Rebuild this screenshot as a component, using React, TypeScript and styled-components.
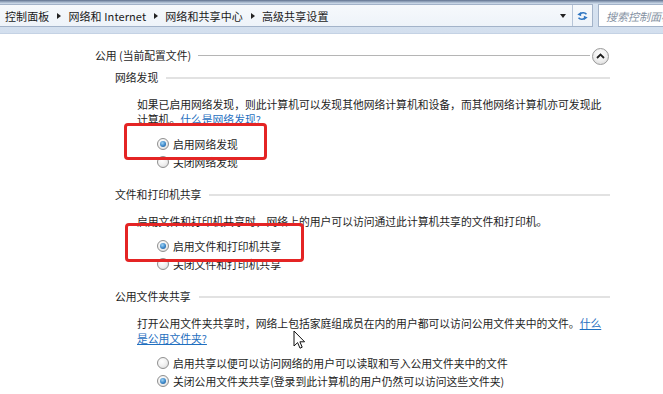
import React from "react";
import styled, { createGlobalStyle } from "styled-components";

const Global = createGlobalStyle`
  html, body { margin: 0; padding: 0; background: #fff; overflow: hidden; }
  body { font-family: "Noto Sans CJK SC", "Noto Sans", sans-serif; color: #222; }
  * { box-sizing: border-box; }
`;

const Page = styled.div`
  position: relative;
  width: 663px;
  height: 394px;
  overflow: hidden;
  background: #fff;
  font-size: 11px;
  letter-spacing: 0;
`;

const Toolbar = styled.div`
  height: 34px;
  display: flex;
  align-items: flex-start;
  padding-top: 4px;
  background: linear-gradient(to bottom, #5f718d 0px, #9fb0c6 2px, #d6e2f0 4px, #d3dfee 34px);
  border-bottom: 1px solid #c4d2e4;
`;

const AddressBox = styled.div`
  height: 23px;
  margin-left: -1px;
  width: 594px;
  display: flex;
  align-items: center;
  background: linear-gradient(to bottom, #f6f9fc, #eef3f9);
  border: 1px solid #a3b3c9;
`;

const Crumbs = styled.div`
  flex: 1;
  display: flex;
  align-items: center;
  padding-left: 5px;
  padding-top: 1px;
  color: #1a1a1a;
  white-space: nowrap;
  line-height: 14px;
  letter-spacing: 0.1px;
`;

const Crumb = styled.span``;

const Sep = styled.span`
  width: 0;
  height: 0;
  margin: 0 7px 0 8px;
  border-top: 3px solid transparent;
  border-bottom: 3px solid transparent;
  border-left: 4px solid #222;
`;

const DropArrow = styled.span`
  width: 0;
  height: 0;
  margin-right: 6px;
  border-left: 3px solid transparent;
  border-right: 3px solid transparent;
  border-top: 4px solid #222;
`;

const RefreshBtn = styled.div`
  width: 20px;
  height: 21px;
  display: flex;
  align-items: center;
  justify-content: center;
  border-left: 1px solid #b7c5d8;
`;

const SearchBox = styled.div`
  margin-left: 5px;
  flex: 1;
  height: 23px;
  display: flex;
  align-items: center;
  padding-left: 7px;
  background: #fff;
  border: 1px solid #a3b3c9;
  border-right: none;
  color: #8592a3;
  font-style: italic;
  white-space: nowrap;
  overflow: hidden;
`;

const Content = styled.div`
  display: flex;
  flex-direction: column;
  font-size: 10.8px;
`;

const ProfileHeader = styled.div`
  margin-top: 11px;
  height: 20px;
  display: flex;
  align-items: center;
  padding-left: 95px;
  padding-right: 54px;
  line-height: 14px;
  color: #1e1e1e;
`;

const ProfileLine = styled.div`
  flex: 1;
  height: 1px;
  background: #b5b5b5;
  margin: 1px 2px 0 7px;
`;

const CollapseBtn = styled.div`
  width: 17px;
  height: 17px;
  margin-top: 2px;
  border-radius: 50%;
  border: 1px solid #9a9a9a;
  background: radial-gradient(circle at 50% 35%, #ffffff 0%, #eeeeee 55%, #d2d2d2 100%);
  display: flex;
  align-items: center;
  justify-content: center;
`;

const Section = styled.div<{ $gap: number }>`
  margin-top: ${(p) => p.$gap}px;
  padding-left: 115px;
  padding-right: 53px;
`;

const SectionHeader = styled.div`
  height: 20px;
  display: flex;
  align-items: center;
  line-height: 14px;
  color: #1e1e1e;
`;

const SectionLine = styled.div`
  flex: 1;
  height: 2px;
  background: #e2e2e2;
  margin-left: 8px;
  margin-top: 1px;
`;

const Body = styled.div`
  padding-left: 22px;
`;

const Para = styled.p`
  margin: 10px 0 0 0;
  line-height: 15px;
  color: #1e1e1e;
  white-space: nowrap;
`;

const Link = styled.a`
  color: #1f6fc0;
  text-decoration: underline;
  cursor: pointer;
`;

const RadioList = styled.div`
  margin-top: 8px;
  padding-left: 20px;
  display: flex;
  flex-direction: column;
`;

const RadioRow = styled.label`
  height: 18px;
  display: flex;
  align-items: center;
  gap: 4px;
  line-height: 14px;
  color: #1e1e1e;
  white-space: nowrap;
`;

const RadioDot = styled.span<{ $on?: boolean }>`
  width: 12px;
  height: 12px;
  border-radius: 50%;
  border: 1px solid #8f8f8f;
  background: radial-gradient(circle at 40% 35%, #ffffff 0%, #f0f0f0 50%, #d4d4d4 100%);
  display: flex;
  align-items: center;
  justify-content: center;
  &::after {
    content: "";
    display: ${(p) => (p.$on ? "block" : "none")};
    width: 6px;
    height: 6px;
    border-radius: 50%;
    background: radial-gradient(circle at 40% 35%, #9fd3f5 0%, #3a86c8 55%, #1c4f86 100%);
  }
`;

const Annotation = styled.div`
  position: absolute;
  border: 3px solid #e42424;
  border-radius: 4px;
  pointer-events: none;
`;

const Cursor = styled.svg`
  position: absolute;
  left: 293px;
  top: 330px;
`;

function Radio({ on, children }: { on?: boolean; children: React.ReactNode }) {
  return (
    <RadioRow>
      <RadioDot $on={on} />
      <span>{children}</span>
    </RadioRow>
  );
}

export default function App() {
  return (
    <Page>
      <Global />
      <Toolbar>
        <AddressBox>
          <Crumbs>
            <Crumb>控制面板</Crumb>
            <Sep />
            <Crumb>网络和 Internet</Crumb>
            <Sep />
            <Crumb>网络和共享中心</Crumb>
            <Sep />
            <Crumb>高级共享设置</Crumb>
          </Crumbs>
          <DropArrow />
          <RefreshBtn>
            <svg width="13" height="12" viewBox="0 0 13 12">
              <path d="M10.5 4.2 C8.8 2.4 6 2.4 4.2 3.8" fill="none" stroke="#2f76c2" strokeWidth="1.6" />
              <path d="M1.3 4.4 L5 2 L5.2 6.2 Z" fill="#2f76c2" />
              <path d="M2.5 7.8 C4.2 9.6 7 9.6 8.8 8.2" fill="none" stroke="#2f76c2" strokeWidth="1.6" />
              <path d="M11.7 7.6 L8 10 L7.8 5.8 Z" fill="#2f76c2" />
            </svg>
          </RefreshBtn>
        </AddressBox>
        <SearchBox>搜索控制面板</SearchBox>
      </Toolbar>

      <Content>
        <ProfileHeader>
          <span>公用 (当前配置文件)</span>
          <ProfileLine />
          <CollapseBtn>
            <svg width="9" height="6" viewBox="0 0 9 6">
              <path d="M1 5 L4.5 1.5 L8 5" fill="none" stroke="#1e1e1e" strokeWidth="1.8" />
            </svg>
          </CollapseBtn>
        </ProfileHeader>

        <Section $gap={2}>
          <SectionHeader>
            <span>网络发现</span>
            <SectionLine />
          </SectionHeader>
          <Body>
            <Para>
              如果已启用网络发现，则此计算机可以发现其他网络计算机和设备，而其他网络计算机亦可发现此
              <br />
              计算机。<Link>什么是网络发现?</Link>
            </Para>
            <RadioList>
              <Radio on>启用网络发现</Radio>
              <Radio>关闭网络发现</Radio>
            </RadioList>
          </Body>
        </Section>

        <Section $gap={13}>
          <SectionHeader>
            <span>文件和打印机共享</span>
            <SectionLine />
          </SectionHeader>
          <Body>
            <Para>启用文件和打印机共享时，网络上的用户可以访问通过此计算机共享的文件和打印机。</Para>
            <RadioList>
              <Radio on>启用文件和打印机共享</Radio>
              <Radio>关闭文件和打印机共享</Radio>
            </RadioList>
          </Body>
        </Section>

        <Section $gap={13}>
          <SectionHeader>
            <span>公用文件夹共享</span>
            <SectionLine />
          </SectionHeader>
          <Body>
            <Para>
              打开公用文件夹共享时，网络上包括家庭组成员在内的用户都可以访问公用文件夹中的文件。<Link>什么</Link>
              <br />
              <Link>是公用文件夹?</Link>
            </Para>
            <RadioList>
              <Radio>启用共享以便可以访问网络的用户可以读取和写入公用文件夹中的文件</Radio>
              <Radio on>关闭公用文件夹共享(登录到此计算机的用户仍然可以访问这些文件夹)</Radio>
            </RadioList>
          </Body>
        </Section>
      </Content>

      <Annotation style={{ left: 124, top: 123, width: 143, height: 37 }} />
      <Annotation style={{ left: 125, top: 223, width: 179, height: 39 }} />

      <Cursor width="13" height="20" viewBox="0 0 13 20">
        <path d="M1 1 L1 16 L4.6 12.6 L7 18.2 L9.2 17.2 L6.9 11.8 L11.6 11.8 Z" fill="#fff" stroke="#111" strokeWidth="1" strokeLinejoin="round" />
      </Cursor>
    </Page>
  );
}
